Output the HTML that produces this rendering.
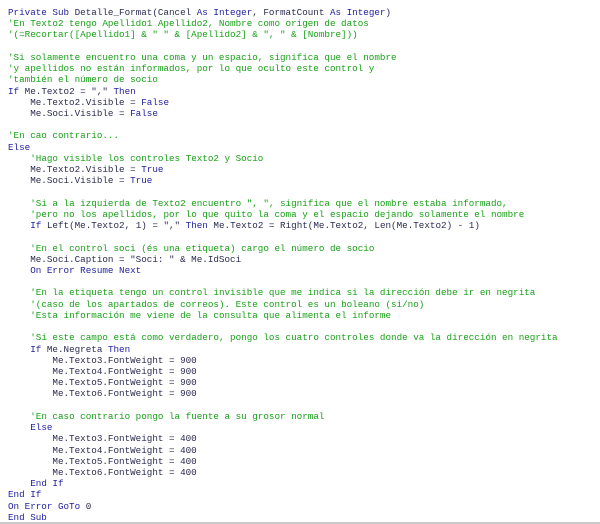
<!DOCTYPE html>
<html><head><meta charset="utf-8"><style>
html,body{margin:0;padding:0;background:#fff;width:600px;height:524px;overflow:hidden}
pre{position:absolute;left:8px;top:7px;margin:0;font-family:"Liberation Mono",monospace;font-size:9.25px;line-height:11.22px;color:#2b2b50}
.k{color:#2222a0}.c{color:#18a018}
.bar{position:absolute;left:0;top:522px;width:600px;height:2px;background:#c8c8c8}
</style></head><body>
<pre><span class="k">Private Sub</span> Detalle_Format(Cancel <span class="k">As Integer</span>, FormatCount <span class="k">As Integer</span>)
<span class="c">'En Texto2 tengo Apellido1 Apellido2, Nombre como origen de datos</span>
<span class="c">'(=Recortar([Apellido1] &amp; " " &amp; [Apellido2] &amp; ", " &amp; [Nombre]))</span>

<span class="c">'Si solamente encuentro una coma y un espacio, significa que el nombre</span>
<span class="c">'y apellidos no están informados, por lo que oculto este control y</span>
<span class="c">'también el número de socio</span>
<span class="k">If</span> Me.Texto2 = "," <span class="k">Then</span>
    Me.Texto2.Visible = <span class="k">False</span>
    Me.Soci.Visible = <span class="k">False</span>

<span class="c">'En cao contrario...</span>
<span class="k">Else</span>
    <span class="c">'Hago visible los controles Texto2 y Socio</span>
    Me.Texto2.Visible = <span class="k">True</span>
    Me.Soci.Visible = <span class="k">True</span>

    <span class="c">'Si a la izquierda de Texto2 encuentro ", ", significa que el nombre estaba informado,</span>
    <span class="c">'pero no los apellidos, por lo que quito la coma y el espacio dejando solamente el nombre</span>
    <span class="k">If</span> Left(Me.Texto2, 1) = "," <span class="k">Then</span> Me.Texto2 = Right(Me.Texto2, Len(Me.Texto2) - 1)

    <span class="c">'En el control soci (és una etiqueta) cargo el número de socio</span>
    Me.Soci.Caption = "Soci: " &amp; Me.IdSoci
    <span class="k">On Error Resume Next</span>

    <span class="c">'En la etiqueta tengo un control invisible que me indica si la dirección debe ir en negrita</span>
    <span class="c">'(caso de los apartados de correos). Este control es un boleano (si/no)</span>
    <span class="c">'Esta información me viene de la consulta que alimenta el informe</span>

    <span class="c">'Si este campo está como verdadero, pongo los cuatro controles donde va la dirección en negrita</span>
    <span class="k">If</span> Me.Negreta <span class="k">Then</span>
        Me.Texto3.FontWeight = 900
        Me.Texto4.FontWeight = 900
        Me.Texto5.FontWeight = 900
        Me.Texto6.FontWeight = 900

    <span class="c">'En caso contrario pongo la fuente a su grosor normal</span>
    <span class="k">Else</span>
        Me.Texto3.FontWeight = 400
        Me.Texto4.FontWeight = 400
        Me.Texto5.FontWeight = 400
        Me.Texto6.FontWeight = 400
    <span class="k">End If</span>
<span class="k">End If</span>
<span class="k">On Error GoTo</span> 0
<span class="k">End Sub</span></pre>
<div class="bar"></div>
</body></html>
